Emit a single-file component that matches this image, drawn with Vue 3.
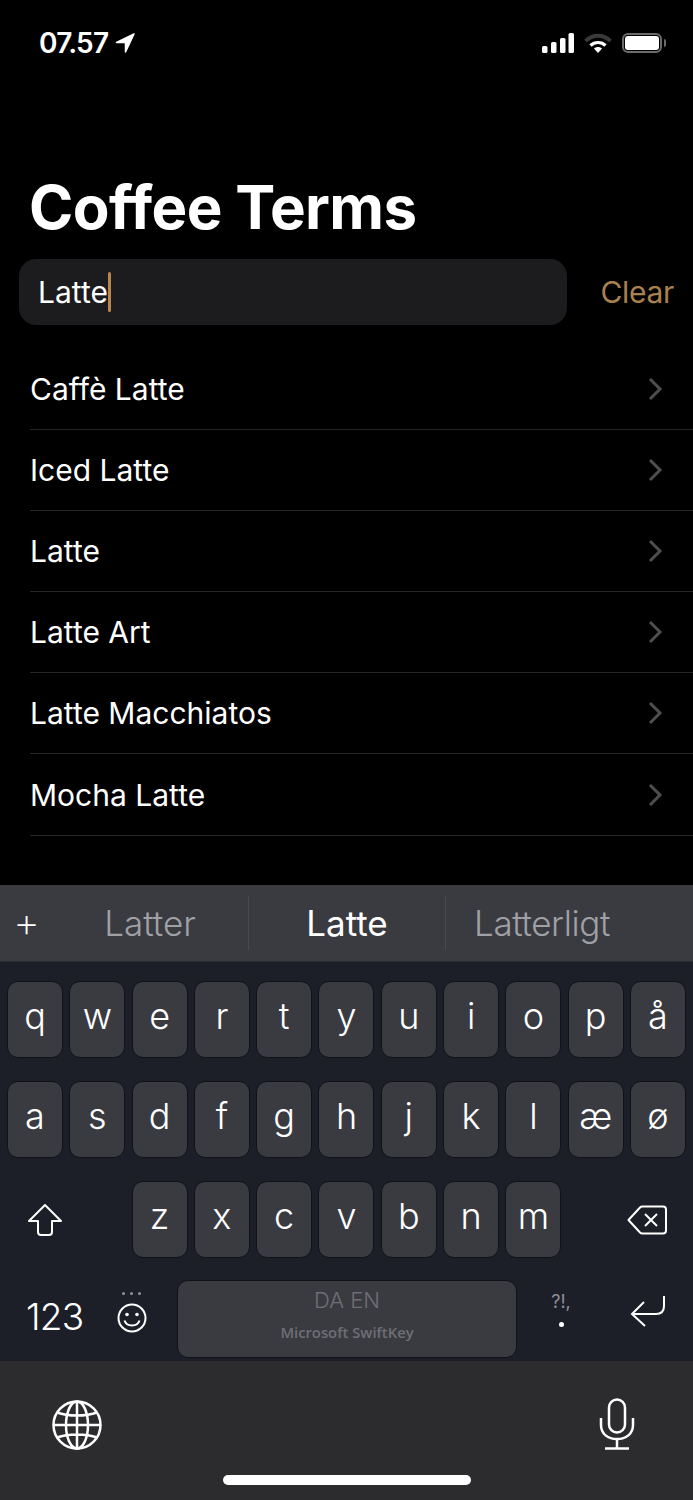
<template>
  <div class="phone">
    <div class="status-bar">
      <div class="status-left">
        <span class="time">07.57</span>
        <svg class="arrow" width="20" height="20" viewBox="0 0 20 20"><path d="M19 1 1.500 9.500h9V19z" fill="#fff" stroke="#fff" stroke-width="1.500" stroke-linejoin="round" /></svg>
      </div>
      <div class="status-right">
        <svg width="33" height="20" viewBox="0 0 33 20">
          <rect x="0" y="13" width="5.500" height="7" rx="1.600" fill="#fff" />
          <rect x="9" y="9" width="5.500" height="11" rx="1.600" fill="#fff" />
          <rect x="18" y="5" width="5.500" height="15" rx="1.600" fill="#fff" />
          <rect x="26.500" y="0" width="5.500" height="20" rx="1.600" fill="#fff" />
        </svg>
        <svg width="28" height="20" viewBox="0 0 28 20">
          <path d="M1.500 8C8.500 1 19.500 1 26.500 8" fill="none" stroke="#3a3a3a" stroke-width="3.800" />
          <path d="M6.500 12.500c4-4 11-4 15 0" fill="none" stroke="#fff" stroke-width="3.200" />
          <path d="M14 20l-4-4.400c2.200-2 5.800-2 8 0z" fill="#fff" />
        </svg>
        <div class="battery"><div class="battery-fill"></div></div>
        <div class="battery-cap"></div>
      </div>
    </div>

    <h1 class="title">Coffee Terms</h1>

    <div class="search-row">
      <div class="search-box">
        <span class="search-text">Latte</span><span class="caret"></span>
      </div>
      <span class="clear">Clear</span>
    </div>

    <div class="list">
      <div v-for="term in terms" :key="term" class="list-row">
        <span>{{ term }}</span>
        <svg width="16" height="26" viewBox="0 0 16 26"><path d="M3 3l10 10L3 23" fill="none" stroke="#4e4e50" stroke-width="3" /></svg>
      </div>
    </div>

    <div class="suggestions">
      <span class="plus">+</span>
      <div class="suggestion muted">Latter</div>
      <div class="suggestion center">Latte</div>
      <div class="suggestion muted last">Latterligt</div>
    </div>

    <div class="keyboard">
      <div class="key-row">
        <div v-for="k in row1" :key="k" class="key">{{ k }}</div>
      </div>
      <div class="key-row">
        <div v-for="k in row2" :key="k" class="key">{{ k }}</div>
      </div>
      <div class="key-row">
        <div class="side-key">
          <svg width="36" height="34" viewBox="0 0 36 34"><path d="M18 2 2 18h9v11q0 3 3 3h8q3 0 3-3V18h9z" fill="none" stroke="#fff" stroke-width="2" stroke-linejoin="round" /></svg>
        </div>
        <div v-for="k in row3" :key="k" class="key">{{ k }}</div>
        <div class="side-key">
          <svg width="40" height="30" viewBox="0 0 40 30"><path d="M1.500 15 13 2.500q1-1 2.500-1H36q3 0 3 3v21q0 3-3 3H15.500q-1.500 0-2.500-1z" fill="none" stroke="#fff" stroke-width="2" stroke-linejoin="round" /><path d="M18 9l12 12M30 9 18 21" fill="none" stroke="#fff" stroke-width="2" /></svg>
        </div>
      </div>
      <div class="bottom-row">
        <span class="numbers">123</span>
        <div class="emoji">
          <span class="dots"><i></i><i></i><i></i></span>
          <svg width="30" height="30" viewBox="0 0 30 30">
            <circle cx="15" cy="15" r="13.500" fill="none" stroke="#fff" stroke-width="2" />
            <circle cx="10" cy="11.500" r="1.800" fill="#fff" />
            <circle cx="20" cy="11.500" r="1.800" fill="#fff" />
            <path d="M7.500 17.500c2 6.500 13 6.500 15 0" fill="none" stroke="#fff" stroke-width="2" />
          </svg>
        </div>
        <div class="space">
          <span class="langs">DA EN</span>
          <span class="brand">Microsoft SwiftKey</span>
        </div>
        <div class="punct">
          <span>?!,</span>
          <i></i>
        </div>
        <div class="return">
          <svg width="36" height="34" viewBox="0 0 36 34"><path d="M34 1v10q0 8-8 8H3M14 7 2 19l13 12" fill="none" stroke="#fff" stroke-width="2" /></svg>
        </div>
      </div>
    </div>

    <div class="system-bar">
      <div class="system-icons">
        <svg width="50" height="50" viewBox="0 0 50 50" fill="none" stroke="#fff" stroke-width="2.500">
          <circle cx="25" cy="25" r="23.500" />
          <ellipse cx="25" cy="25" rx="11" ry="23.500" />
          <path d="M25 1.500v47M1.500 25h47M5 12.500c11 4 29 4 40 0M5 37.500c11-4 29-4 40 0" />
        </svg>
        <svg width="36" height="52" viewBox="0 0 36 52" fill="none" stroke="#fff" stroke-width="2.500">
          <rect x="10" y="1.500" width="16" height="33" rx="8" />
          <path d="M2 20v7c0 9 7 14 16 14s16-5 16-14v-7M18 41v9M6 50.500h24" />
        </svg>
      </div>
      <div class="home-indicator"></div>
    </div>
  </div>
</template>

<script setup>
const terms = ['Caffè Latte', 'Iced Latte', 'Latte', 'Latte Art', 'Latte Macchiatos', 'Mocha Latte']
const row1 = ['q', 'w', 'e', 'r', 't', 'y', 'u', 'i', 'o', 'p', 'å']
const row2 = ['a', 's', 'd', 'f', 'g', 'h', 'j', 'k', 'l', 'æ', 'ø']
const row3 = ['z', 'x', 'c', 'v', 'b', 'n', 'm']
</script>

<style>
body {
  margin: 0;
  background: #000;
}
</style>

<style scoped>
.phone {
  width: 693px;
  height: 1500px;
  background: #000;
  color: #fff;
  font-family: Inter, "Liberation Sans", sans-serif;
  overflow: hidden;
  display: flex;
  flex-direction: column;
}

.status-bar {
  height: 85px;
  padding: 0 27px 0 39px;
  display: flex;
  justify-content: space-between;
  align-items: center;
  box-sizing: border-box;
}
.status-left {
  display: flex;
  align-items: center;
  gap: 7px;
}
.time {
  font-size: 28px;
  font-weight: 600;
  letter-spacing: -0.7px;
}
.status-right {
  display: flex;
  align-items: center;
}
.status-right svg:first-child {
  margin-right: 9px;
}
.status-right svg:nth-child(2) {
  margin-right: 10px;
}
.battery {
  width: 34px;
  height: 14px;
  border: 2px solid #6a6a6a;
  border-radius: 6px;
  padding: 1px;
}
.battery-fill {
  width: 100%;
  height: 100%;
  background: #fff;
  border-radius: 3px;
}
.battery-cap {
  width: 2px;
  height: 8px;
  background: #6a6a6a;
  margin-left: 2px;
  border-radius: 0 2px 2px 0;
}

.title {
  margin: 85px 0 0 29px;
  font-size: 60px;
  line-height: 74px;
  font-weight: 700;
  letter-spacing: -0.65px;
  height: 74px;
}

.search-row {
  margin-top: 15px;
  padding: 0 19px;
  display: flex;
  align-items: center;
  justify-content: space-between;
}
.search-box {
  width: 548px;
  height: 66px;
  background: #1c1c1e;
  border-radius: 17px;
  padding-left: 19px;
  box-sizing: border-box;
  display: flex;
  align-items: center;
}
.search-text {
  font-size: 30px;
}
.caret {
  width: 3px;
  height: 40px;
  background: #b5884f;
  border-radius: 2px;
}
.clear {
  font-size: 30px;
  color: #a9824f;
  letter-spacing: -0.3px;
}

.list {
  margin-top: 23.5px;
  padding-left: 30px;
}
.list-row {
  height: 81.2px;
  box-sizing: border-box;
  border-bottom: 1.500px solid #262628;
  padding-right: 30px;
  display: flex;
  align-items: center;
  justify-content: space-between;
  font-size: 30px;
}

.suggestions {
  margin-top: 49.5px;
  height: 77px;
  background: #3a3b41;
  border-bottom: 1px solid #2a2b31;
  box-sizing: border-box;
  display: flex;
  align-items: center;
  padding-left: 52px;
  position: relative;
  font-size: 35px;
  font-weight: 300;
}
.plus {
  position: absolute;
  left: 13px;
  top: 11px;
  font-size: 42px;
  font-weight: 200;
}
.suggestion {
  width: 196px;
  height: 54px;
  display: flex;
  align-items: center;
  justify-content: center;
  border-right: 1px solid #4a4b51;
}
.suggestion.last {
  border-right: none;
  letter-spacing: -0.4px;
  margin-left: -2px;
}
.center {
  color: #fff;
  font-weight: 400;
}
.muted {
  color: #a0a1a6;
}

.keyboard {
  height: 399px;
  background: #1c1f27;
  padding: 19px 7px 0;
  box-sizing: border-box;
}
.key-row {
  display: grid;
  grid-template-columns: repeat(11, 56px);
  column-gap: 6.3px;
  height: 77px;
  margin-bottom: 23px;
}
.key {
  background: #3a3b41;
  border: 1px solid #101217;
  border-radius: 11px;
  box-sizing: border-box;
  display: flex;
  align-items: center;
  justify-content: center;
  padding-bottom: 7px;
  font-size: 36px;
  font-weight: 300;
}
.side-key {
  grid-column: span 2;
  display: flex;
  align-items: center;
  justify-content: center;
}
.side-key:first-child {
  justify-content: flex-start;
  padding-left: 20px;
}
.side-key:last-child {
  justify-content: flex-end;
  padding-right: 19px;
}

.bottom-row {
  display: flex;
  align-items: flex-start;
  margin-top: -1px;
  height: 80px;
}
.numbers {
  margin-left: 19px;
  width: 91px;
  margin-top: 14px;
  font-size: 37px;
  font-weight: 300;
  letter-spacing: -0.7px;
}
.emoji {
  width: 60px;
  display: flex;
  flex-direction: column;
  align-items: flex-start;
  padding-top: 12px;
  gap: 8px;
}
.dots {
  display: flex;
  gap: 5px;
  margin-left: 5px;
}
.dots i {
  width: 3px;
  height: 3px;
  background: #8e9097;
  border-radius: 50%;
}
.space {
  width: 340px;
  height: 78px;
  background: #3a3b41;
  border: 1px solid #101217;
  border-radius: 11px;
  box-sizing: border-box;
  display: flex;
  flex-direction: column;
  align-items: center;
  padding-top: 6px;
  color: #6e6f75;
}
.langs {
  font-size: 22px;
  font-weight: 300;
}
.brand {
  margin-top: 9px;
  font-size: 14.8px;
  font-family: "Open Sans", sans-serif;
  font-weight: 600;
}
.punct {
  width: 88px;
  display: flex;
  flex-direction: column;
  align-items: center;
  padding-top: 11px;
  color: #8e9097;
  font-size: 18px;
  line-height: 22px;
}
.punct i {
  width: 5px;
  height: 5px;
  background: #fff;
  border-radius: 50%;
  margin-top: 9px;
}
.return {
  margin-left: 25px;
  margin-top: 15px;
}

.system-bar {
  flex: 1;
  background: #2c2c2e;
  display: flex;
  flex-direction: column;
}
.system-icons {
  display: flex;
  justify-content: space-between;
  align-items: flex-end;
  padding: 37px 58px 0 52px;
}
.home-indicator {
  width: 248px;
  height: 10px;
  background: #fff;
  border-radius: 5px;
  margin: 25px auto 0;
}
</style>
